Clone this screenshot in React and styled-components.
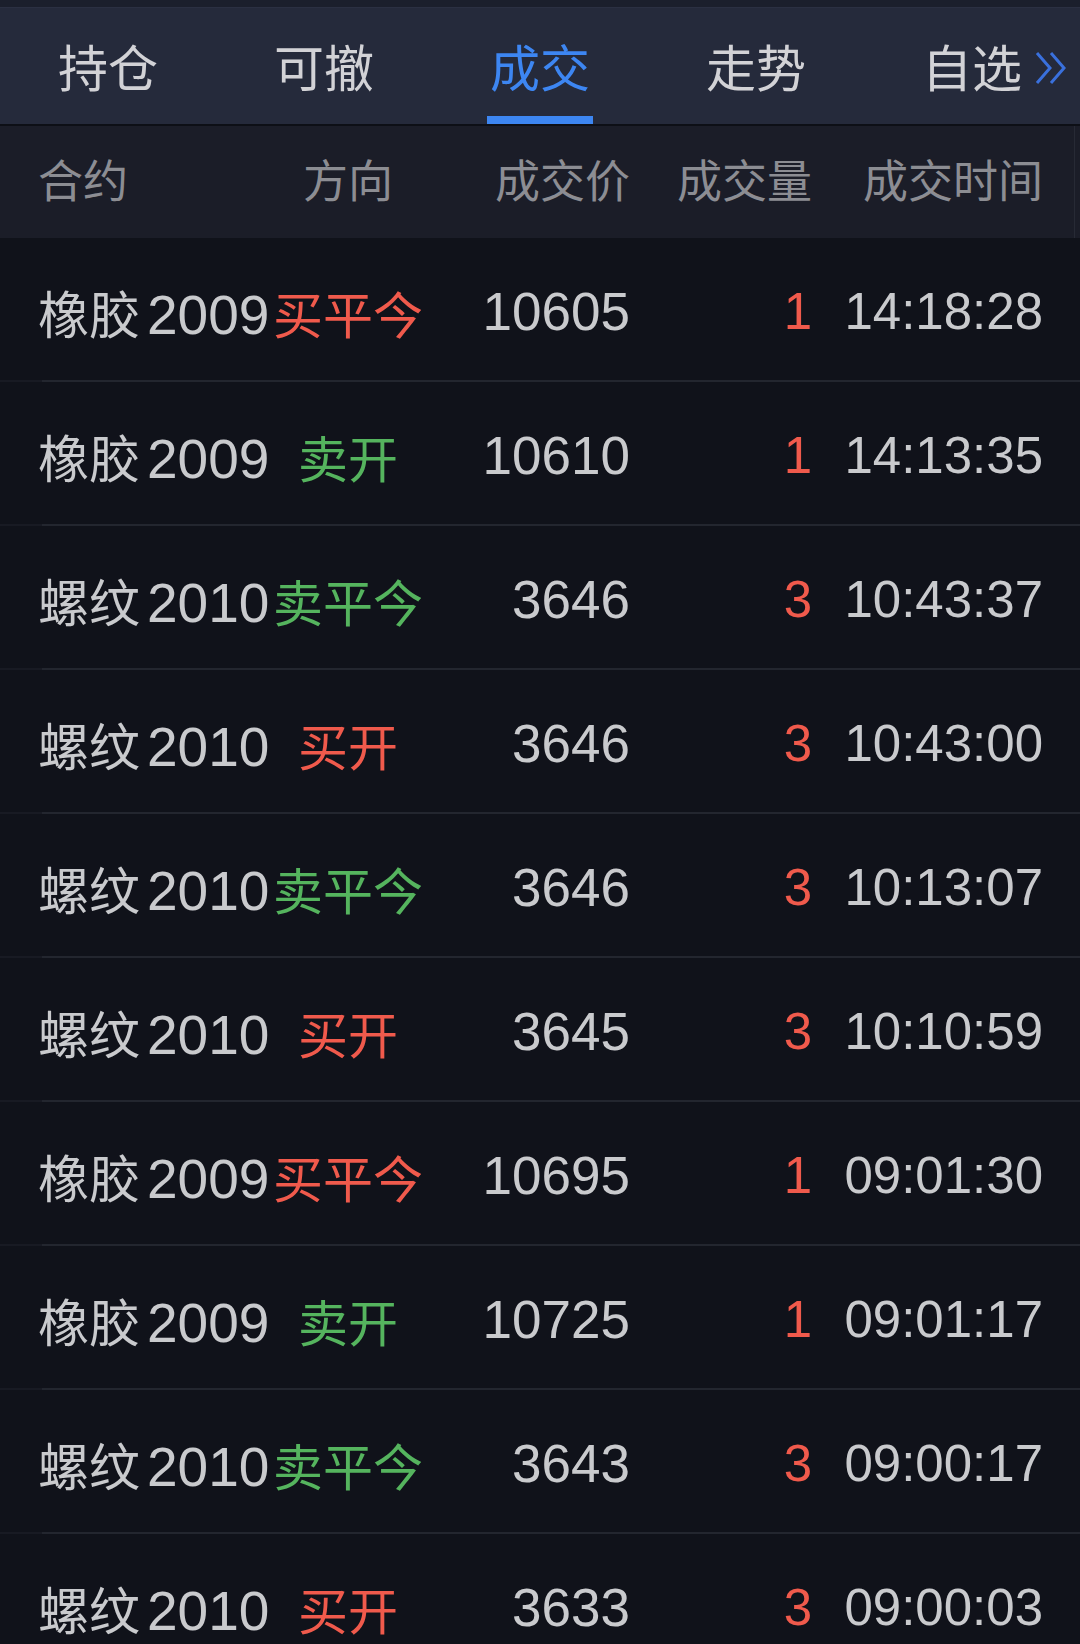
import React from 'react';
import styled, { createGlobalStyle } from 'styled-components';

const GlobalStyle = createGlobalStyle`
  html, body {
    margin: 0;
    padding: 0;
    background: #10121a;
  }
  body {
    font-family: "Liberation Sans", "Noto Sans CJK SC", sans-serif;
    -webkit-font-smoothing: antialiased;
  }
`;

const Page = styled.div`
  display: flex;
  flex-direction: column;
  width: 1080px;
  background: #10121a;
`;

const TopStrip = styled.div`
  height: 7px;
  background: #1b1f2c;
  border-bottom: 1px solid #2b3042;
`;

const TabBar = styled.div`
  display: flex;
  height: 116px;
  background: #252a3b;
  border-bottom: 2px solid #0d0f16;
`;

const Tab = styled.div`
  flex: 1;
  display: flex;
  justify-content: center;
  align-items: stretch;
`;

const TabLabel = styled.div`
  position: relative;
  display: flex;
  align-items: center;
  box-sizing: border-box;
  padding: 6px 3px 0;
  font-family: "Noto Sans CJK SC", sans-serif;
  font-size: 50px;
  color: ${p => (p.$active ? '#3d86f2' : '#d2d2d6')};
  border-bottom: 8px solid ${p => (p.$active ? '#3d86f2' : 'transparent')};
`;

const MoreIcon = styled.svg`
  position: absolute;
  left: calc(100% + 9px);
  top: 42px;
  width: 36px;
  height: 36px;
`;

const Columns = styled.div`
  display: grid;
  grid-template-columns: 234px 152px 206px 182px 231px;
  padding: 0 37px 0 38px;
  align-items: center;
`;

const HeaderRow = styled(Columns)`
  position: relative;
  box-sizing: border-box;
  height: 112px;
  padding-bottom: 8px;
  background: #1b1d28;
  font-family: "Noto Sans CJK SC", sans-serif;
  font-size: 45px;
  color: #8c8d93;

  &::after {
    content: '';
    position: absolute;
    right: 5px;
    top: 0;
    bottom: 0;
    width: 1px;
    background: #272a35;
  }
`;

const Row = styled(Columns)`
  position: relative;
  box-sizing: border-box;
  height: 144px;
  padding-top: 5px;
  border-bottom: 2px solid #181a23;
  font-size: 51px;
  color: #c9cacd;

  &::after {
    content: '';
    position: absolute;
    left: 42px;
    right: 0;
    bottom: -2px;
    height: 2px;
    background: #23262f;
  }
`;

const Cell = styled.div`
  display: flex;
  align-items: baseline;
  white-space: nowrap;
  justify-content: ${p =>
    p.$align === 'center' ? 'center' : p.$align === 'right' ? 'flex-end' : 'flex-start'};
  color: ${p => p.$color || 'inherit'};
  font-size: ${p => p.$size || 'inherit'};
`;

const ContractName = styled.span`
  font-family: "Noto Sans CJK SC", sans-serif;
  font-size: 51px;
`;

const ContractMonth = styled.span`
  margin-left: 7px;
  font-size: 55px;
`;

const Direction = styled.span`
  font-family: "Noto Sans CJK SC", sans-serif;
  font-size: 50px;
`;

const RED = '#f05a4c';
const GREEN = '#55b45e';

const tabs = ['持仓', '可撤', '成交', '走势', '自选'];

const trades = [
  ['橡胶', '2009', '买平今', 10605, 1, '14:18:28'],
  ['橡胶', '2009', '卖开', 10610, 1, '14:13:35'],
  ['螺纹', '2010', '卖平今', 3646, 3, '10:43:37'],
  ['螺纹', '2010', '买开', 3646, 3, '10:43:00'],
  ['螺纹', '2010', '卖平今', 3646, 3, '10:13:07'],
  ['螺纹', '2010', '买开', 3645, 3, '10:10:59'],
  ['橡胶', '2009', '买平今', 10695, 1, '09:01:30'],
  ['橡胶', '2009', '卖开', 10725, 1, '09:01:17'],
  ['螺纹', '2010', '卖平今', 3643, 3, '09:00:17'],
  ['螺纹', '2010', '买开', 3633, 3, '09:00:03'],
];

export default function App() {
  return (
    <Page>
      <GlobalStyle />
      <TopStrip />
      <TabBar>
        {tabs.map((t, i) => (
          <Tab key={t}>
            <TabLabel $active={i === 2}>
              {t}
              {i === tabs.length - 1 && (
                <MoreIcon viewBox="0 0 36 36" fill="none" stroke="#3a70dc" strokeWidth="3">
                  <polyline points="3,3 16,18 3,33" />
                  <polyline points="17,3 30,18 17,33" />
                </MoreIcon>
              )}
            </TabLabel>
          </Tab>
        ))}
      </TabBar>
      <HeaderRow>
        <Cell>合约</Cell>
        <Cell $align="center">方向</Cell>
        <Cell $align="right">成交价</Cell>
        <Cell $align="right">成交量</Cell>
        <Cell $align="right">成交时间</Cell>
      </HeaderRow>
      {trades.map(([name, month, dir, price, vol, time], i) => (
        <Row key={i}>
          <Cell>
            <ContractName>{name}</ContractName>
            <ContractMonth>{month}</ContractMonth>
          </Cell>
          <Cell $align="center" $color={dir.startsWith('买') ? RED : GREEN}>
            <Direction>{dir}</Direction>
          </Cell>
          <Cell $align="right" $size="53px">{price}</Cell>
          <Cell $align="right" $color={RED}>{vol}</Cell>
          <Cell $align="right">{time}</Cell>
        </Row>
      ))}
    </Page>
  );
}
